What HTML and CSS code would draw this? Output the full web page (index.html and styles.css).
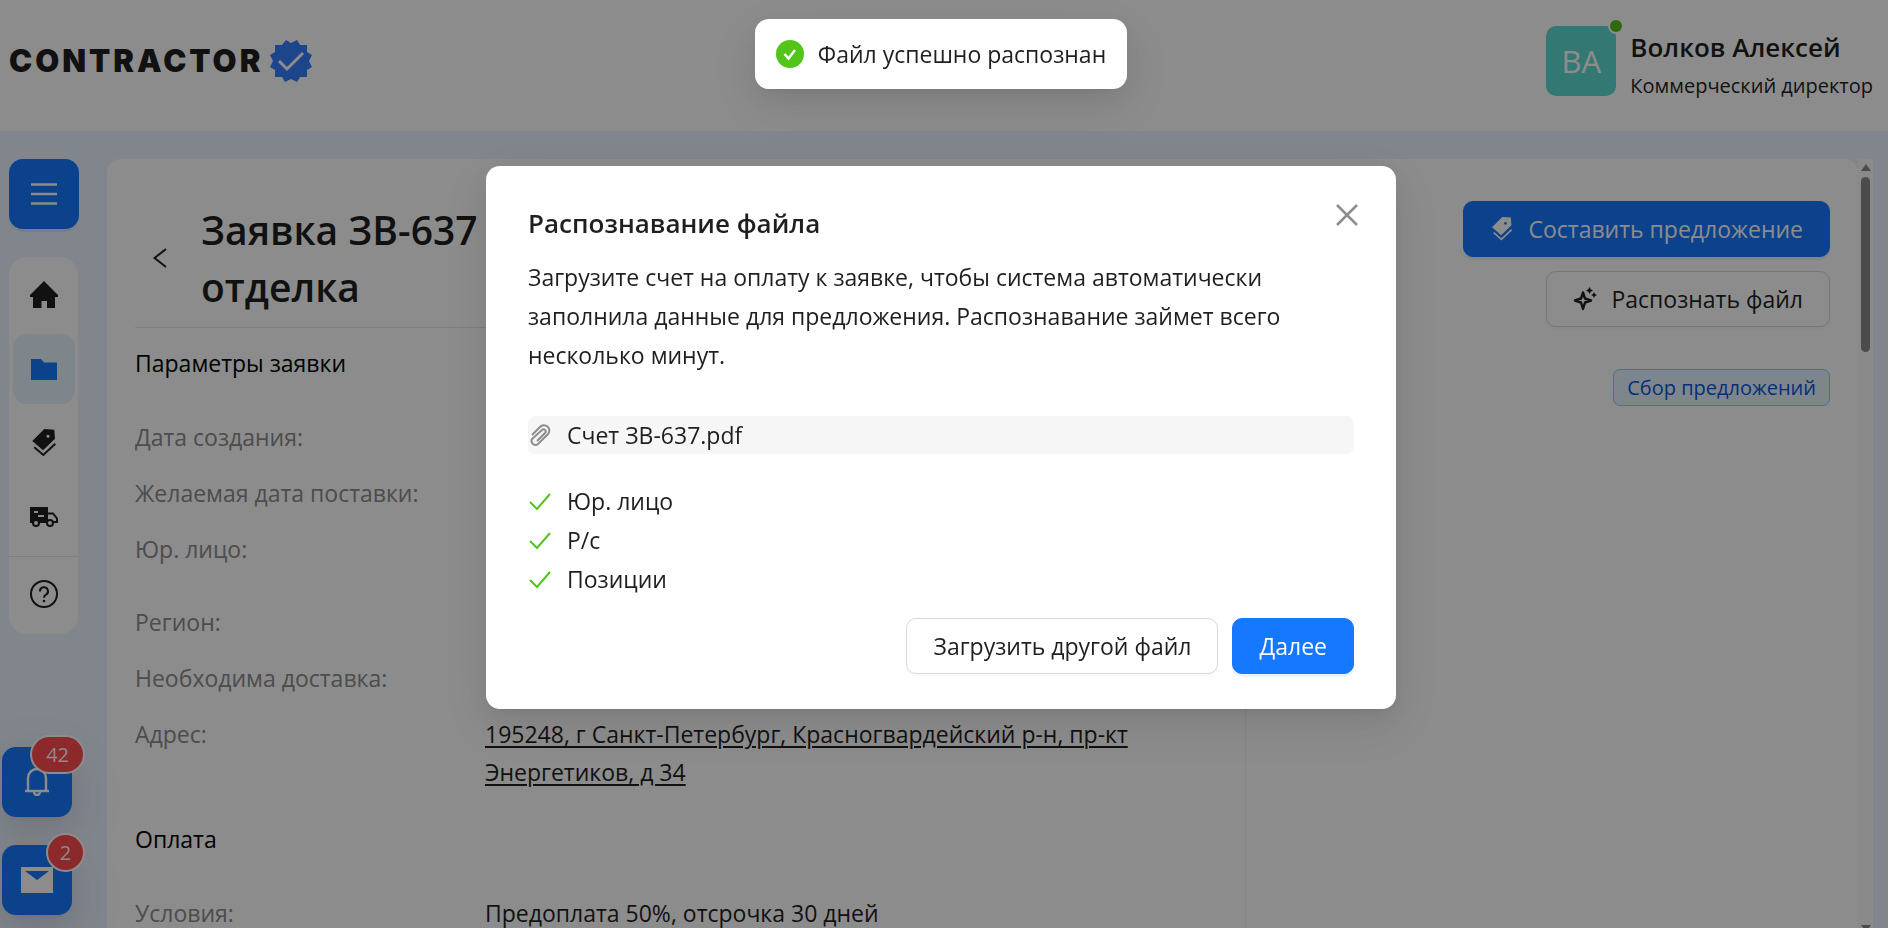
FILE: index.html
```html
<!DOCTYPE html>
<html lang="ru">

<head>
    <meta charset="UTF-8">
    <meta name="viewport" content="width=device-width, initial-scale=1.0">
    <title>Contractor - Заявка ЗВ-637</title>
    <link rel="stylesheet" href="styles.css">
</head>

<body>

    <!-- icons that are used more than once -->
    <svg class="sprite" aria-hidden="true">
        <symbol id="icon-tags" viewBox="0 0 28 28">
            <path d="M14.300 0 L24.300 0.700 L25 9.700 L13 21.300 L2.300 12 Z M18 5.700 a1.600 1.600 0 1 0 0.010 0 Z" fill-rule="evenodd" />
            <path d="M4.300 18.300 L13.300 26 L25.300 14.800" fill="none" stroke="currentColor" stroke-width="2" />
        </symbol>
        <symbol id="icon-check" viewBox="0 0 22 18">
            <path d="M1 9 L8 16 L21 1" fill="none" stroke="currentColor" stroke-width="2" />
        </symbol>
    </svg>

    <div class="page">
        <header class="header">
            <a href="#" class="logo">
                <span>CONTRACTOR</span>
                <svg width="44" height="44" viewBox="0 0 44 44">
                    <path d="M17 1 L22 4 L28 1 L31 6 L38 6 L38 13 L43 16 L40 22 L43 28 L38 31 L38 38 L31 38 L28 43 L22 40 L16 43 L13 38 L6 38 L6 31 L1 28 L4 22 L1 16 L6 13 L6 6 L13 6 Z" fill="#347eff" />
                    <path d="M10 22 L18 30 L34 14" fill="none" stroke="#fff" stroke-width="3" />
                </svg>
            </a>
            <div class="user">
                <div class="avatar">ВА<span class="online"></span></div>
                <div class="user-info">
                    <div class="user-name">Волков Алексей</div>
                    <div class="user-role">Коммерческий директор</div>
                </div>
            </div>
        </header>

        <div class="body">
            <aside class="sidebar">
                <button class="menu-toggle" type="button" aria-label="Меню">
                    <svg width="26" height="22" viewBox="0 0 26 22"><path d="M0 1.500H26M0 11H26M0 20.500H26" stroke="currentColor" stroke-width="2.500" /></svg>
                </button>
                <nav class="menu">
                    <a href="#" class="menu-item" aria-label="Главная">
                        <svg width="28" height="28" viewBox="0 0 28 28"><path d="M14 0 L28 14 V16 H25 V27 H17 V20 H11.500 V27 H3 V16 H0 V14 Z" /></svg>
                    </a>
                    <a href="#" class="menu-item active" aria-label="Заявки">
                        <svg width="26" height="22" viewBox="0 0 26 22"><path d="M0 1 H10 L13 4.500 H26 V22 H0 Z" /></svg>
                    </a>
                    <a href="#" class="menu-item" aria-label="Предложения">
                        <svg width="28" height="28"><use href="#icon-tags" /></svg>
                    </a>
                    <a href="#" class="menu-item" aria-label="Доставка">
                        <svg width="28" height="20" viewBox="0 0 28 20">
                            <path d="M0 0 H18 V16 H0 Z M4 4 V6 H8 V4 Z M8 8 V10 H14 V8 Z" fill-rule="evenodd" />
                            <path d="M18 6.500 H23 L27 11.500 V15 H18" fill="none" stroke="currentColor" stroke-width="2" />
                            <circle class="wheel" cx="6" cy="16" r="3" />
                            <circle class="wheel" cx="20" cy="16" r="3" />
                        </svg>
                    </a>
                    <a href="#" class="menu-item help" aria-label="Помощь">
                        <svg width="28" height="28" viewBox="0 0 28 28" fill="none">
                            <circle cx="14" cy="14" r="13" stroke="currentColor" stroke-width="2" />
                            <path d="M10 11.500 a4 4 0 1 1 6 3.200 q-2 1.200 -2 3" stroke="currentColor" stroke-width="2" />
                            <circle cx="14" cy="21" r="1.300" fill="currentColor" />
                        </svg>
                    </a>
                </nav>
            </aside>

            <main class="content">
                <section class="request">
                    <div class="request-head">
                        <a href="#" class="back" aria-label="Назад">
                            <svg width="14" height="20" viewBox="0 0 14 20"><path d="M13 1 L1.500 10 L13 19" fill="none" stroke="currentColor" stroke-width="2" /></svg>
                        </a>
                        <h1>Заявка ЗВ-637 <br>отделка</h1>
                    </div>
                    <h2>Параметры заявки</h2>
                    <dl class="params">
                        <div><dt>Дата создания:</dt><dd></dd></div>
                        <div><dt>Желаемая дата поставки:</dt><dd></dd></div>
                        <div class="company"><dt>Юр. лицо:</dt><dd></dd></div>
                        <div><dt>Регион:</dt><dd></dd></div>
                        <div><dt>Необходима доставка:</dt><dd></dd></div>
                        <div><dt>Адрес:</dt><dd><a href="#">195248, г Санкт-Петербург, Красногвардейский р-н, пр-кт Энергетиков, д 34</a></dd></div>
                    </dl>
                    <h2>Оплата</h2>
                    <dl class="params">
                        <div><dt>Условия:</dt><dd>Предоплата 50%, отсрочка 30 дней</dd></div>
                    </dl>
                </section>
                <section class="actions">
                    <button class="btn primary" type="button">
                        <svg width="24" height="24"><use href="#icon-tags" /></svg>
                        Составить предложение
                    </button>
                    <button class="btn" type="button">
                        <svg width="24" height="24" viewBox="0 0 24 24">
                            <path d="M10 5.500 L12 11.500 L18 13.500 L12 15.500 L10 22 L8 15.500 L2 13.500 L8 11.500 Z" fill="none" stroke="currentColor" stroke-width="2.400" stroke-linejoin="round" />
                            <path d="M16.500 0 L17.700 2.300 L20 3.500 L17.700 4.700 L16.500 7 L15.300 4.700 L13 3.500 L15.300 2.300 Z M21 5 L22 7 L24 8 L22 9 L21 11 L20 9 L18 8 L20 7 Z" />
                        </svg>
                        Распознать файл
                    </button>
                    <span class="status">Сбор предложений</span>
                </section>
            </main>
            <div class="scrollbar"><span class="arrow"></span><span class="thumb"></span><span class="arrow down"></span></div>
        </div>

        <div class="float-buttons">
            <button class="float-btn" type="button" aria-label="Уведомления">
                <svg width="24" height="28" viewBox="0 0 24 28" fill="none" stroke="currentColor" stroke-width="2.400">
                    <path d="M3 23 V10 a9 9 0 0 1 18 0 V23 M0 23 H24 M9 24 a3 3 0 0 0 6 0" />
                </svg>
                <span class="badge">42</span>
            </button>
            <button class="float-btn" type="button" aria-label="Сообщения">
                <svg width="32" height="26" viewBox="0 0 32 26"><path d="M0 0 H32 V26 H0 Z M4 4 L16 13 L28 4 Z" fill-rule="evenodd" /></svg>
                <span class="badge round">2</span>
            </button>
        </div>
    </div>

    <div class="mask">
        <div class="modal" role="dialog" aria-labelledby="modal-title">
            <button class="close" type="button" aria-label="Закрыть">
                <svg width="22" height="22" viewBox="0 0 22 22"><path d="M1 1 L21 21 M21 1 L1 21" stroke="currentColor" stroke-width="2.500" /></svg>
            </button>
            <h3 id="modal-title">Распознавание файла</h3>
            <p>Загрузите счет на оплату к заявке, чтобы система автоматически заполнила данные для предложения. Распознавание займет всего несколько минут.</p>
            <div class="file">
                <svg width="24" height="24" viewBox="0 0 24 24" fill="none" stroke="currentColor" stroke-width="2">
                    <path d="M4 12 L12 4 a5 5 0 0 1 8 7 L10 21 a4 4 0 0 1 -6 -5 L14 7 a2 2 0 0 1 3 3 L9 18" />
                </svg>
                Счет ЗВ-637.pdf
            </div>
            <ul class="checks">
                <li><svg width="24" height="18"><use href="#icon-check" /></svg>Юр. лицо</li>
                <li><svg width="24" height="18"><use href="#icon-check" /></svg>Р/с</li>
                <li><svg width="24" height="18"><use href="#icon-check" /></svg>Позиции</li>
            </ul>
            <div class="modal-footer">
                <button class="btn" type="button">Загрузить другой файл</button>
                <button class="btn primary" type="button">Далее</button>
            </div>
        </div>
    </div>

    <div class="messages">
        <div class="toast" role="status">
            <svg width="28" height="28" viewBox="0 0 28 28"><circle cx="14" cy="14" r="14" fill="#52c41a" /><path d="M8.500 14 L12.500 18.500 L19 10" fill="none" stroke="#fff" stroke-width="2.500" /></svg>
            Файл успешно распознан
        </div>
    </div>

</body>

</html>
```
FILE: styles.css
```css
* {
    box-sizing: border-box;
}

body {
    margin: 0;
    font-family: "Open Sans", "Noto Sans", sans-serif;
    font-size: 23px;
    line-height: 38px;
    color: #1f1f1f;
}

h1, h2, h3, p, ul, dl, dd {
    margin: 0;
    padding: 0;
}

button {
    font-family: inherit;
    font-size: inherit;
    cursor: pointer;
}

svg {
    fill: currentColor;
    flex-shrink: 0;
}

svg[fill="none"] {
    fill: none;
}

.sprite {
    display: none;
}

.page {
    display: flex;
    flex-direction: column;
    height: 100vh;
    overflow: hidden;
    background-color: #ebf2ff;
}

/* header */
.header {
    display: flex;
    justify-content: space-between;
    padding: 26px 15px 35px 9px;
    background-color: #fff;
}

.logo {
    display: flex;
    align-items: center;
    gap: 6px;
    height: 70px;
    font-family: Inter, sans-serif;
    font-size: 31px;
    font-weight: 900;
    letter-spacing: 3px;
    color: #1f1f1f;
    text-decoration: none;
}

.user {
    display: flex;
    gap: 14px;
    height: 70px;
}

.avatar {
    position: relative;
    width: 70px;
    height: 70px;
    border-radius: 10px;
    background-color: #5fdad4;
    color: #fff;
    font-size: 31px;
    line-height: 70px;
    text-align: center;
}

.online {
    position: absolute;
    top: -6px;
    right: -6px;
    width: 12px;
    height: 12px;
    border-radius: 50%;
    background-color: #52c41a;
    box-shadow: 0 0 0 2px #fff;
}

.user-name {
    font-size: 26px;
    font-weight: 600;
    line-height: 42px;
}

.user-role {
    font-size: 20px;
    line-height: 35px;
}

/* sidebar */
.body {
    display: flex;
    flex: 1;
    min-height: 0;
    padding: 28px 15px 0 9px;
}

.sidebar {
    display: flex;
    flex-direction: column;
    gap: 28px;
    width: 70px;
    margin-right: 28px;
}

.menu-toggle {
    display: flex;
    justify-content: center;
    align-items: center;
    height: 70px;
    padding: 0;
    border: none;
    border-radius: 14px;
    background-color: #1677ff;
    color: #fff;
    box-shadow: 0 3px 0 rgba(5, 145, 255, 0.1);
}

.menu {
    display: flex;
    flex-direction: column;
    gap: 4px;
    width: 69px;
    padding: 3px 0;
    border-radius: 18px;
    background-color: #fff;
}

.menu-item {
    display: flex;
    justify-content: center;
    align-items: center;
    height: 70px;
    margin: 0 3px 0 4px;
    border-radius: 14px;
    color: #1f1f1f;
}

.menu-item.active {
    background-color: #e6f4ff;
    color: #1677ff;
}

.menu-item.help {
    height: 75px;
    margin: 0;
    border-top: 1px solid #e8e8e8;
    border-radius: 0;
}

.wheel {
    fill: #fff;
    stroke: currentColor;
    stroke-width: 2;
}

/* request card */
.content {
    display: flex;
    flex: 1;
    overflow: hidden;
    padding: 42px 28px 0;
    border-radius: 14px 14px 0 0;
    background-color: #fff;
}

.request {
    flex: 19;
    border-right: 1px solid #f0f0f0;
}

.request-head {
    display: flex;
    align-items: center;
    padding: 0 0 12px 18px;
    border-bottom: 1px solid #e8e8e8;
}

.back {
    display: flex;
    width: 48px;
    color: #1f1f1f;
}

h1 {
    font-size: 39px;
    font-weight: 600;
    line-height: 57px;
}

h2 {
    margin: 16px 0 36px;
    font-size: 23px;
    font-weight: 400;
    color: #000;
}

.params div {
    display: flex;
    padding-bottom: 18px;
}

.params .company {
    min-height: 73px;
}

dt {
    width: 350px;
    color: #8c8c8c;
}

dd {
    flex: 1;
    padding-right: 70px;
}

dd a {
    color: #1f1f1f;
    text-decoration-thickness: 2px;
    text-underline-offset: 3px;
}

.params + h2 {
    margin-top: 11px;
}

.actions {
    display: flex;
    flex: 10;
    flex-direction: column;
    align-items: flex-end;
    gap: 14px;
}

.btn {
    display: flex;
    align-items: center;
    gap: 14px;
    height: 56px;
    padding: 0 26px;
    border: 1px solid #d9d9d9;
    border-radius: 10px;
    background-color: #fff;
    color: #1f1f1f;
    box-shadow: 0 3px 0 rgba(0, 0, 0, 0.02);
}

.btn.primary {
    border-color: #1677ff;
    background-color: #1677ff;
    color: #fff;
    box-shadow: 0 3px 0 rgba(5, 145, 255, 0.1);
}

.status {
    margin-top: 28px;
    padding: 0 13px;
    border: 1px solid #91caff;
    border-radius: 7px;
    background-color: #e6f4ff;
    color: #0958d9;
    font-size: 20px;
    line-height: 35px;
}

.scrollbar {
    display: flex;
    flex-direction: column;
    align-items: center;
    width: 15px;
    padding-top: 5px;
    background-color: #fcfcfc;
}

.arrow {
    border: 5px solid transparent;
    border-top: none;
    border-bottom: 7px solid #8b8b8b;
}

.thumb {
    width: 9px;
    height: 175px;
    margin-top: 6px;
    border-radius: 5px;
    background-color: #8b8b8b;
}

.arrow.down {
    margin: auto 0 -4px;
    transform: rotate(180deg);
}

/* floating buttons */
.float-buttons {
    position: fixed;
    left: 2px;
    bottom: 13px;
    display: flex;
    flex-direction: column;
    gap: 28px;
}

.float-btn {
    position: relative;
    display: flex;
    justify-content: center;
    align-items: center;
    width: 70px;
    height: 70px;
    padding: 0;
    border: none;
    border-radius: 14px;
    background-color: #1677ff;
    color: #fff;
    box-shadow: 0 10px 28px rgba(0, 0, 0, 0.08), 0 5px 10px -7px rgba(0, 0, 0, 0.12), 0 16px 49px 14px rgba(0, 0, 0, 0.05);
}

.badge {
    position: absolute;
    top: -10px;
    right: -11px;
    min-width: 35px;
    height: 35px;
    padding: 0 14px;
    border-radius: 18px;
    background-color: #ff4d4f;
    box-shadow: 0 0 0 2px #fff;
    font-size: 20px;
    line-height: 35px;
}

.badge.round {
    padding: 0;
}

/* modal */
.mask {
    position: fixed;
    inset: 0;
    padding: 166px 12px 0 6px;
    background-color: rgba(0, 0, 0, 0.45);
}

.modal {
    position: relative;
    max-width: 910px;
    margin: 0 auto;
    padding: 36px 42px 35px;
    border-radius: 14px;
    background-color: #fff;
    box-shadow: 0 10px 28px rgba(0, 0, 0, 0.08), 0 5px 10px -7px rgba(0, 0, 0, 0.12), 0 16px 49px 14px rgba(0, 0, 0, 0.05);
}

.close {
    position: absolute;
    top: 38px;
    right: 38px;
    display: flex;
    padding: 0;
    border: none;
    background: none;
    color: #8c8c8c;
}

h3 {
    font-size: 26px;
    font-weight: 600;
    line-height: 42px;
}

.modal p {
    margin: 14px 0 41px;
    line-height: 39px;
}

.file {
    display: flex;
    align-items: center;
    gap: 15px;
    border-radius: 7px;
    background-color: #f6f6f6;
}

.file svg {
    color: #8c8c8c;
}

.checks {
    margin: 28px 0 19px;
    line-height: 39px;
    list-style: none;
}

.checks li {
    display: flex;
    align-items: center;
    gap: 15px;
}

.checks svg {
    color: #52c41a;
}

.modal-footer {
    display: flex;
    justify-content: flex-end;
    gap: 14px;
}

/* message on top */
.messages {
    position: fixed;
    top: 19px;
    left: 0;
    right: 6px;
    display: flex;
    justify-content: center;
}

.toast {
    display: flex;
    align-items: center;
    gap: 14px;
    padding: 16px 21px;
    border-radius: 14px;
    background-color: #fff;
    box-shadow: 0 10px 28px rgba(0, 0, 0, 0.08), 0 5px 10px -7px rgba(0, 0, 0, 0.12), 0 16px 49px 14px rgba(0, 0, 0, 0.05);
}
```
